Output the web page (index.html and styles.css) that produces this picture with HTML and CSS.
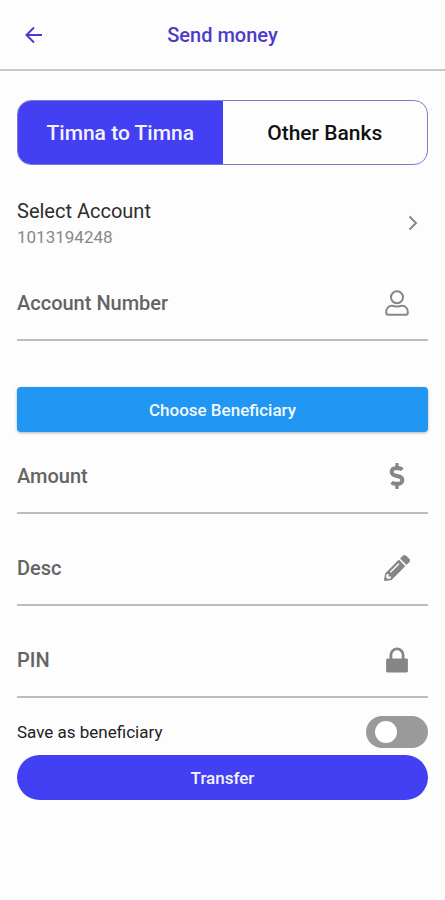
FILE: index.html
```html
<!DOCTYPE html>
<html lang="en">
<head>
<meta charset="utf-8">
<meta name="viewport" content="width=device-width, initial-scale=1">
<title>Send money</title>
<link rel="stylesheet" href="styles.css">
</head>
<body>
<header class="topbar">
  <button class="back" type="button" aria-label="Back">
    <svg width="18" height="18" viewBox="0 0 18 18" fill="none" stroke="currentColor" stroke-width="2"><path d="M17 9H2M9 1.500L1.500 9L9 16.500"/></svg>
  </button>
  <h1 class="title">Send money</h1>
</header>
<main class="content">
  <div class="tabs" role="tablist">
    <button class="tab tab-active" type="button" role="tab" aria-selected="true">Timna to Timna</button>
    <button class="tab" type="button" role="tab" aria-selected="false">Other Banks</button>
  </div>
  <button class="account" type="button">
    <span class="account-text">
      <span class="account-name">Select Account</span>
      <span class="account-number">1013194248</span>
    </span>
    <svg width="10" height="16" viewBox="0 0 10 16" fill="none" stroke="currentColor" stroke-width="2"><path d="M1.500 1.500L8 8L1.500 14.500"/></svg>
  </button>
  <form class="form">
    <div class="field">
      <label for="number">Account Number</label>
      <input id="number" type="text" inputmode="numeric">
      <svg class="icon" viewBox="0 0 26 26" ><path class="outline" d="M13 1.200a6 6 0 1 1 0 12a6 6 0 1 1 0-12zM8 15.800c2 0 3 .8 5 .8s3-.8 5-.8c3.500 0 5.800 2.800 5.800 6v1c0 1.200-.8 2-2 2H4.200c-1.200 0-2-.8-2-2v-1c0-3.200 2.300-6 5.800-6z"/></svg>
    </div>
    <button class="choose" type="button">Choose Beneficiary</button>
    <div class="field">
      <label for="amount">Amount</label>
      <input id="amount" type="text" inputmode="decimal">
      <svg class="icon" viewBox="-112 0 512 512"><path d="M209.200 233.400l-108-31.600C88.700 198.200 80 186.500 80 173.500c0-16.300 13.200-29.500 29.500-29.500h66.300c12.200 0 24.200 3.700 34.200 10.500 6.100 4.100 14.300 3.100 19.500-2l34.800-34c7.100-6.900 6.100-18.400-1.800-24.500C238 74.800 207.400 64.100 176 64V16c0-8.800-7.200-16-16-16h-32c-8.800 0-16 7.200-16 16v48h-2.500C45.800 64-5.400 118.700.5 183.600c4.200 46.100 39.400 83.600 83.800 96.600l102.500 30c12.500 3.700 21.200 15.300 21.200 28.300 0 16.300-13.200 29.500-29.500 29.500h-66.300C100 368 88 364.300 78 357.500c-6.100-4.100-14.300-3.100-19.500 2l-34.800 34c-7.100 6.900-6.100 18.400 1.800 24.500 24.500 19.200 55.100 29.900 86.500 30v48c0 8.800 7.200 16 16 16h32c8.800 0 16-7.200 16-16v-48.200c46.600-.9 90.300-28.600 105.700-72.700 21.500-61.600-14.600-124.800-72.500-141.700z"/></svg>
    </div>
    <div class="field">
      <label for="desc">Desc</label>
      <input id="desc" type="text">
      <svg class="icon" viewBox="0 0 512 512"><path d="M497.900 142.100l-46.100 46.100c-4.700 4.700-12.300 4.700-17 0l-111-111c-4.700-4.700-4.700-12.300 0-17l46.100-46.100c18.700-18.700 49.100-18.700 67.900 0l60.100 60.100c18.800 18.700 18.800 49.100 0 67.900zM284.200 99.800L21.600 362.400.4 483.900c-2.900 16.400 11.400 30.600 27.800 27.800l121.500-21.300 262.600-262.600c4.700-4.700 4.700-12.300 0-17l-111-111c-4.800-4.700-12.400-4.700-17.100 0zM124.100 339.900c-5.500-5.500-5.500-14.300 0-19.800l154-154c5.500-5.500 14.300-5.500 19.800 0s5.500 14.300 0 19.800l-154 154c-5.500 5.500-14.300 5.500-19.800 0zM88 424h48v36.300l-64.500 11.300-31.100-31.100L51.700 376H88v48z"/></svg>
    </div>
    <div class="field">
      <label for="pin">PIN</label>
      <input id="pin" type="password">
      <svg class="icon" viewBox="0 0 26 26"><path d="M22.500 11.500h-2V8a7.500 7.500 0 0 0-15 0v3.500h-2c-.8 0-1.400.6-1.400 1.400v11.200c0 .8.600 1.400 1.400 1.400h19c.8 0 1.400-.6 1.400-1.400V12.900c0-.8-.6-1.400-1.400-1.400zM17.700 11.500H8.300V8a4.700 4.700 0 0 1 9.400 0z"/></svg>
    </div>
    <div class="save">
      <label for="save">Save as beneficiary</label>
      <input id="save" class="switch" type="checkbox" role="switch">
    </div>
    <button class="transfer" type="button">Transfer</button>
  </form>
</main>
</body>
</html>
```
FILE: styles.css
```css
* {
  box-sizing: border-box;
}

body {
  margin: 0;
  background: #fdfdfd;
  color: #222;
  font-family: Roboto, "Liberation Sans", sans-serif;
}

button,
input {
  margin: 0;
  padding: 0;
  border: 0;
  background: none;
  color: inherit;
  font: inherit;
}

svg {
  display: block;
  flex: none;
}

.topbar {
  display: grid;
  grid-template-columns: 32px 1fr 32px;
  align-items: center;
  height: 71px;
  padding: 0 18px;
  border-bottom: 2px solid #c8c8c8;
  color: #4c3bcb;
}

.back {
  display: grid;
  place-items: center;
  height: 32px;
}

.title {
  margin: 0;
  font-size: 20px;
  font-weight: 500;
  line-height: 24px;
  text-align: center;
}

.content {
  padding: 29px 17px;
}

.tabs {
  display: grid;
  grid-template-columns: 1fr 1fr;
  height: 65px;
  overflow: hidden;
  border: 1px solid #8279cf;
  border-radius: 14px;
}

.tab {
  color: #111;
  font-size: 21px;
  font-weight: 500;
}

.tab-active {
  background: #4340f4;
  color: #f4f4ff;
}

.account {
  display: flex;
  align-items: center;
  justify-content: space-between;
  width: 100%;
  margin-top: 32px;
  padding-right: 10px;
  color: #888;
  text-align: left;
}

.account-text {
  display: grid;
}

.account-name {
  color: #2d2d2d;
  font-size: 20px;
  line-height: 28px;
}

.account-number {
  font-size: 17px;
  line-height: 24px;
}

.form {
  display: grid;
}

.field {
  display: flex;
  align-items: center;
  height: 92px;
  padding: 18px 18px 0 0;
  border-bottom: 2px solid #bdbdbd;
  color: #646464;
  font-size: 20px;
  font-weight: 500;
}

.field input {
  flex: 1;
  min-width: 0;
  height: 40px;
}

.icon {
  width: 26px;
  height: 26px;
  fill: #868686;
}

.outline {
  fill: none;
  stroke: #868686;
  stroke-width: 2;
}

.choose {
  height: 45px;
  margin-top: 46px;
  margin-bottom: -10px;
  border-radius: 4px;
  background: #2196f3;
  box-shadow: 0 1px 3px rgb(0 0 0 / 30%);
  color: #f2faff;
  font-size: 17px;
  font-weight: 500;
}

.save {
  display: flex;
  align-items: center;
  justify-content: space-between;
  margin: 18px 0 7px;
  font-size: 17px;
}

.switch {
  display: flex;
  align-items: center;
  width: 62px;
  height: 32px;
  padding-left: 9px;
  border-radius: 16px;
  background: #9a9a9a;
  appearance: none;
}

.switch::before {
  width: 22px;
  height: 22px;
  border-radius: 50%;
  background: #fff;
  content: "";
}

.switch:checked {
  justify-content: flex-end;
  padding: 0 9px 0 0;
  background: #4340f4;
}

.transfer {
  height: 45px;
  border-radius: 23px;
  background: #4340f4;
  color: #f4f4ff;
  font-size: 17px;
  font-weight: 500;
}
```
